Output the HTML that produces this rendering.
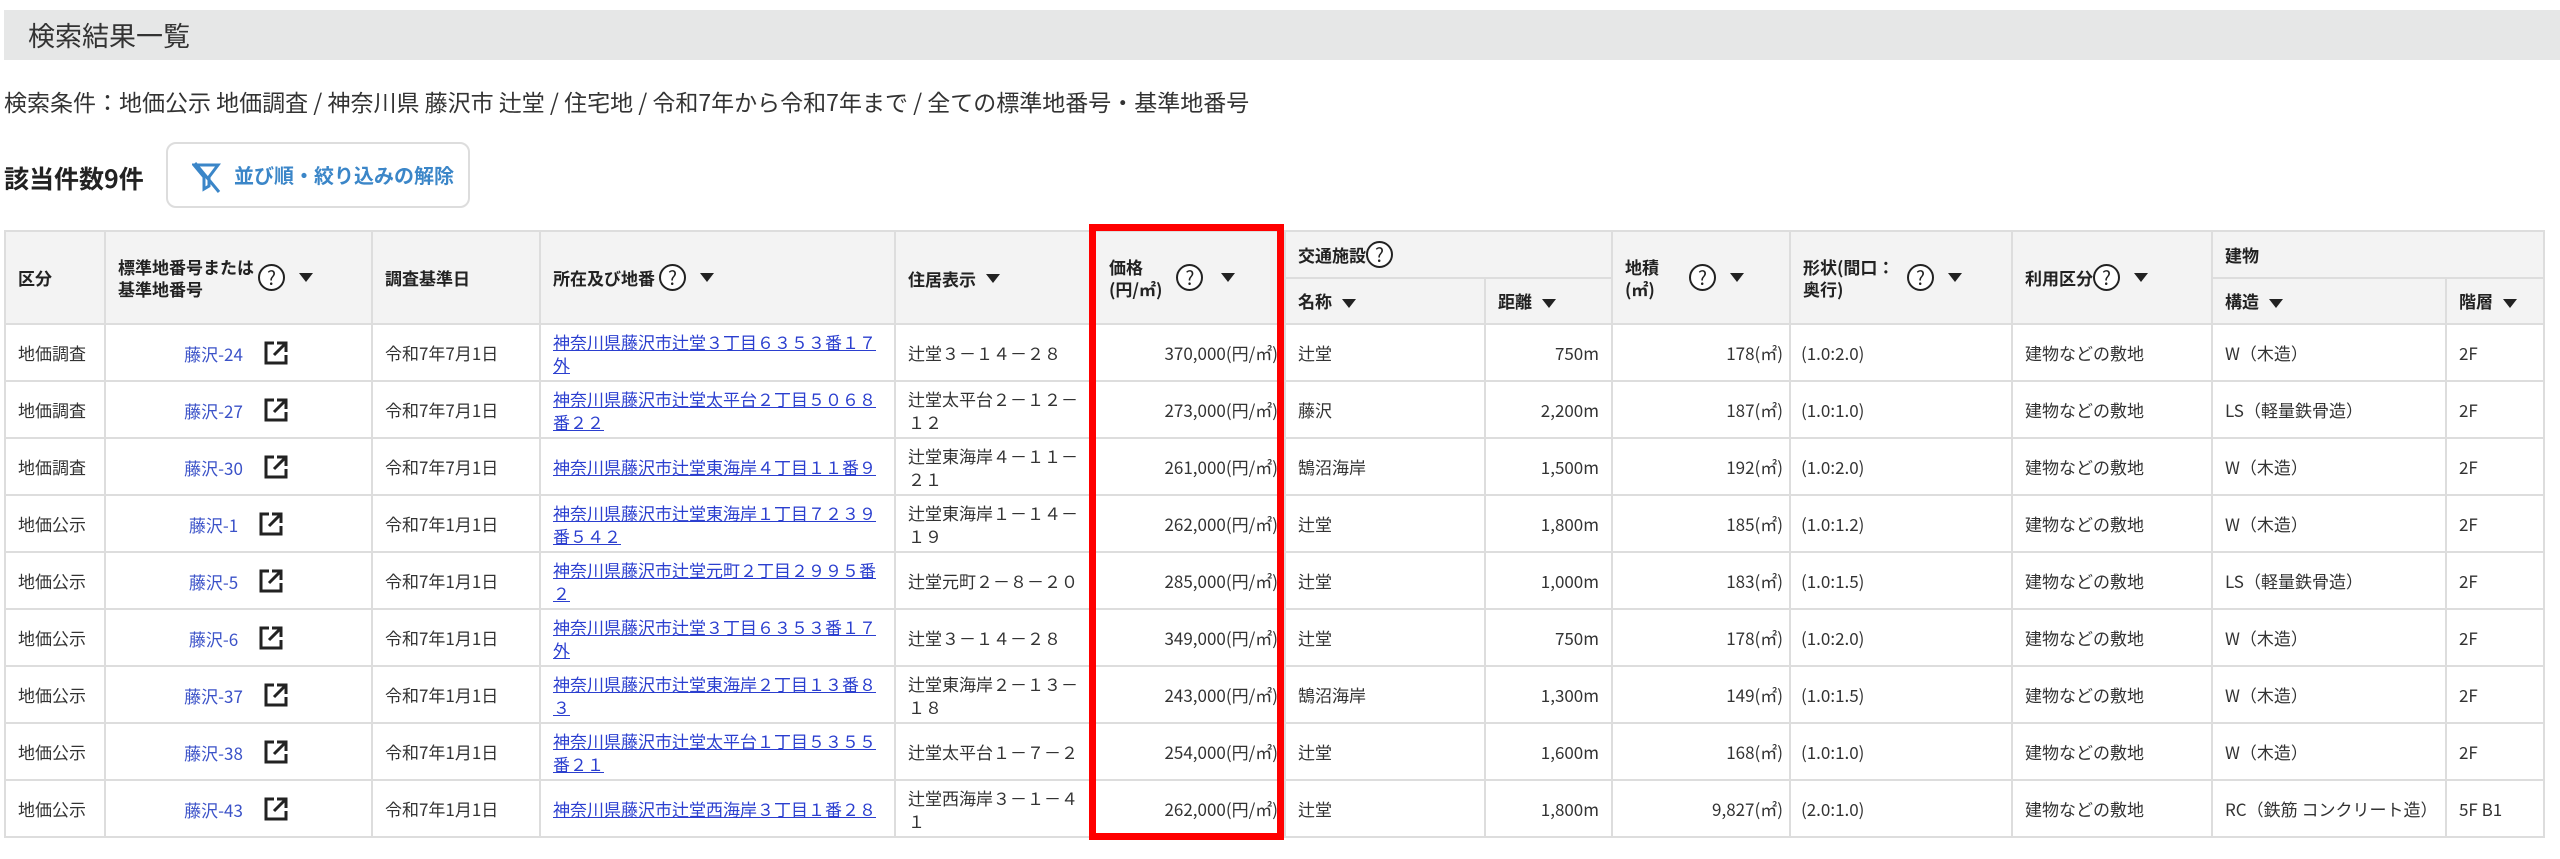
<!DOCTYPE html>
<html><head><meta charset="utf-8">
<style>
*{box-sizing:border-box;margin:0;padding:0}
body{width:2560px;height:859px;background:#fff;font-family:"Noto Sans CJK JP","Liberation Sans",sans-serif;color:#333;position:relative;overflow:hidden}
.bar{position:absolute;left:4px;top:10px;width:2556px;height:50px;background:#e6e7e7;font-size:27px;line-height:50px;padding-left:24px;color:#333}
.cond{position:absolute;left:4px;top:85px;font-size:23px;line-height:32px;color:#333}
.cnt{position:absolute;left:4px;top:161px;font-size:25px;font-weight:bold;line-height:34px;color:#222}
.btn{position:absolute;left:166px;top:142px;width:304px;height:66px;border:2px solid #ddd;border-radius:10px;color:#3b86c8;font-weight:bold;font-size:20px;line-height:62px;padding-left:66px}
.btn svg{position:absolute;left:24px;top:18px}
table{position:absolute;left:4px;top:230px;border-collapse:collapse;table-layout:fixed;width:2539px}
th,td{border:2px solid #ddd;font-size:17px;text-align:left;vertical-align:middle}
th{background:#f3f3f3;font-weight:bold;color:#222;padding:0 12px;line-height:22px}
td{height:57px;padding:0 12px;line-height:23px;color:#333}
tr.h1 th{height:47px}
tr.h2 th{height:46px}
td.r{text-align:right}
td.c{text-align:center}
a{color:#2b3fcf;text-decoration:underline}
.lk{color:#3b52c8;text-decoration:none;vertical-align:middle}
.ext{display:inline-block;vertical-align:middle;margin-left:20px}
.q{display:inline-block;width:27px;height:27px;border:2px solid #222;border-radius:50%;text-align:center;line-height:23px;font-size:19px;font-weight:normal;vertical-align:middle;margin:0 4px;background:#fff}
.t{display:inline-block;vertical-align:middle;margin-left:10px;width:0;height:0;border-left:7px solid transparent;border-right:7px solid transparent;border-top:9px solid #222}
.ib{display:inline-block;vertical-align:middle}
.red{position:absolute;left:1089px;top:224px;width:195px;height:616px;border:7px solid #f00}
</style></head><body>
<div class="bar">検索結果一覧</div>
<div class="cond">検索条件：地価公示 地価調査 / 神奈川県 藤沢市 辻堂 / 住宅地 / 令和7年から令和7年まで / 全ての標準地番号・基準地番号</div>
<div class="cnt">該当件数9件</div>
<div class="btn"><svg width="30" height="32" viewBox="0 0 30 32"><path d="M2 3H26L17 15V24L12 27V15Z" fill="none" stroke="#3b86c8" stroke-width="3"/><path d="M3 1L27 30" stroke="#3b86c8" stroke-width="3"/></svg>並び順・絞り込みの解除</div>
<table>
<colgroup><col style="width:100px"><col style="width:267px"><col style="width:168px"><col style="width:355px"><col style="width:200px"><col style="width:190px"><col style="width:200px"><col style="width:127px"><col style="width:178px"><col style="width:222px"><col style="width:200px"><col style="width:234px"><col style="width:98px"></colgroup>
<tr class="h1">
<th rowspan="2">区分</th>
<th rowspan="2"><span class="ib">標準地番号または<br>基準地番号</span><span class="q">?</span><span class="t"></span></th>
<th rowspan="2">調査基準日</th>
<th rowspan="2"><span class="ib">所在及び地番</span><span class="q">?</span><span class="t"></span></th>
<th rowspan="2"><span class="ib">住居表示</span><span class="t"></span></th>
<th rowspan="2" style="padding-left:13px"><span class="ib">価格<br>(円/㎡)</span><span class="q" style="margin-left:14px">?</span><span class="t" style="margin-left:14px"></span></th>
<th colspan="2"><span class="ib">交通施設</span><span class="q" style="margin-left:0">?</span></th>
<th rowspan="2"><span class="ib" style="width:60px">地積<br>(㎡)</span><span class="q">?</span><span class="t"></span></th>
<th rowspan="2"><span class="ib" style="width:100px">形状(間口：<br>奥行)</span><span class="q">?</span><span class="t"></span></th>
<th rowspan="2"><span class="ib">利用区分</span><span class="q" style="margin-left:0">?</span><span class="t"></span></th>
<th colspan="2">建物</th>
</tr>
<tr class="h2">
<th>名称<span class="t"></span></th><th>距離<span class="t"></span></th>
<th>構造<span class="t"></span></th><th>階層<span class="t"></span></th>
</tr>
<tbody id="b"></tbody>
</table>
<div class="red"></div>
<script>
var d=[
["地価調査","藤沢-24","令和7年7月1日","神奈川県藤沢市辻堂３丁目６３５３番１７外","辻堂３－１４－２８","370,000","辻堂","750m","178","(1.0:2.0)","W（木造）","2F"],
["地価調査","藤沢-27","令和7年7月1日","神奈川県藤沢市辻堂太平台２丁目５０６８番２２","辻堂太平台２－１２－１２","273,000","藤沢","2,200m","187","(1.0:1.0)","LS（軽量鉄骨造）","2F"],
["地価調査","藤沢-30","令和7年7月1日","神奈川県藤沢市辻堂東海岸４丁目１１番９","辻堂東海岸４－１１－２１","261,000","鵠沼海岸","1,500m","192","(1.0:2.0)","W（木造）","2F"],
["地価公示","藤沢-1","令和7年1月1日","神奈川県藤沢市辻堂東海岸１丁目７２３９番５４２","辻堂東海岸１－１４－１９","262,000","辻堂","1,800m","185","(1.0:1.2)","W（木造）","2F"],
["地価公示","藤沢-5","令和7年1月1日","神奈川県藤沢市辻堂元町２丁目２９９５番２","辻堂元町２－８－２０","285,000","辻堂","1,000m","183","(1.0:1.5)","LS（軽量鉄骨造）","2F"],
["地価公示","藤沢-6","令和7年1月1日","神奈川県藤沢市辻堂３丁目６３５３番１７外","辻堂３－１４－２８","349,000","辻堂","750m","178","(1.0:2.0)","W（木造）","2F"],
["地価公示","藤沢-37","令和7年1月1日","神奈川県藤沢市辻堂東海岸２丁目１３番８３","辻堂東海岸２－１３－１８","243,000","鵠沼海岸","1,300m","149","(1.0:1.5)","W（木造）","2F"],
["地価公示","藤沢-38","令和7年1月1日","神奈川県藤沢市辻堂太平台１丁目５３５５番２１","辻堂太平台１－７－２","254,000","辻堂","1,600m","168","(1.0:1.0)","W（木造）","2F"],
["地価公示","藤沢-43","令和7年1月1日","神奈川県藤沢市辻堂西海岸３丁目１番２８","辻堂西海岸３－１－４１","262,000","辻堂","1,800m","9,827","(2.0:1.0)","RC（鉄筋 コンクリート造）","5F B1"]];
var ext='<svg class="ext" width="26" height="26" viewBox="0 0 26 26"><path d="M11 3H3V23H23V15" fill="none" stroke="#222" stroke-width="3"/><path d="M14 3H23V12M23 3L11 15" fill="none" stroke="#222" stroke-width="3"/></svg>';
var h="";
d.forEach(function(r){
h+='<tr><td>'+r[0]+'</td><td class="c" style="padding-left:8px">'+'<span class="lk">'+r[1]+'</span>'+ext+'</td><td>'+r[2]+'</td><td><a>'+r[3]+'</a></td><td>'+r[4]+'</td><td class="r" style="padding-right:6px">'+r[5]+'(円/㎡)</td><td>'+r[6]+'</td><td class="r">'+r[7]+'</td><td class="r" style="padding-right:6px">'+r[8]+'(㎡)</td><td style="padding-left:10px">'+r[9]+'</td><td>建物などの敷地</td><td style="white-space:nowrap">'+r[10]+'</td><td>'+r[11]+'</td></tr>';
});
document.getElementById("b").innerHTML=h;
</script>
</body></html>
